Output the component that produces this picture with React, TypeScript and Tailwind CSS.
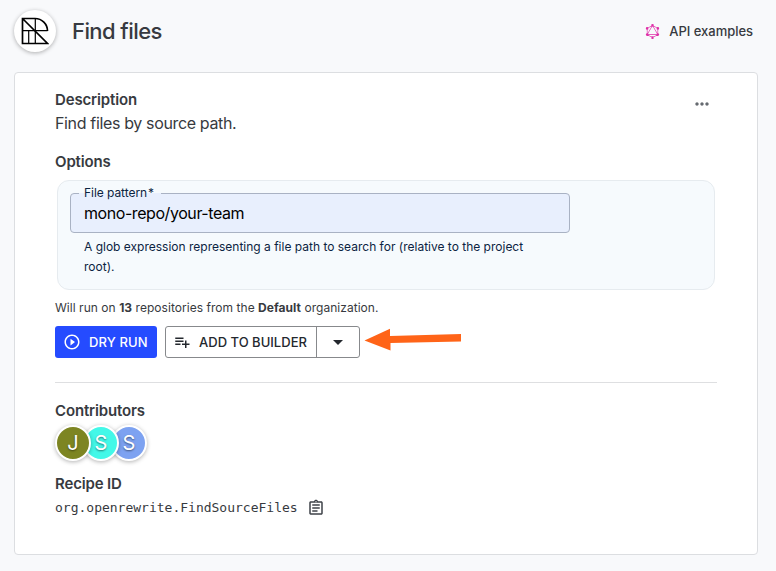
import type { ReactNode } from "react";
import { MdArrowDropDown, MdMoreHoriz, MdOutlineAssignment, MdPlayCircleOutline, MdPlaylistAdd } from "react-icons/md";
import { SiGraphql } from "react-icons/si";

function RecipeLogo() {
  return (
    <svg width="28" height="28" viewBox="0 0 28 28" fill="none" stroke="#000">
      <path strokeWidth="1.7" d="M14 1.5A12.500 12.500 0 0 1 26.500 14M14 1.500H1.500V26.500H26.500L1.500 1.500" />
      <path strokeWidth="1.2" d="M1.500 13.700H26.500M14.300 1.500V26.500M7.700 13.700V26.500" />
    </svg>
  );
}

function Heading({ children }: { children: ReactNode }) {
  return <h2 className="h-5 text-[15px] leading-5 font-semibold tracking-[-0.15px]">{children}</h2>;
}

const contributors = [
  { initial: "J", color: "bg-[#7d8522]" },
  { initial: "S", color: "bg-[#43f8e8]" },
  { initial: "S", color: "bg-[#7da2f1]" },
];

export default function App() {
  return (
    <div className="h-[571px] w-[776px] overflow-hidden bg-[#f8f9fb] pl-3.5 font-['Inter',sans-serif] whitespace-nowrap text-[#373a40]">
      <header className="flex h-[72px] items-start pt-2.5">
        <div className="flex size-[42px] items-center justify-center rounded-full bg-white shadow-[0_1px_4px_rgba(0,0,0,0.3)]">
          <RecipeLogo />
        </div>
        <h1 className="ml-4 h-[42px] text-[22px] leading-[42px] font-medium tracking-[-0.57px]">Find files</h1>
        <a className="mr-[23px] ml-auto flex h-[42px] items-center gap-[9px] text-[13px] font-medium tracking-[-0.03px]">
          <SiGraphql size={15} color="#df2fa8" />
          <span className="pt-0.5">API examples</span>
        </a>
      </header>

      <main className="h-[483px] w-[744px] rounded-[4px] border border-[#dcdee1] bg-white pt-[17px] pr-10 pl-10">
        <div className="flex justify-between">
          <Heading>Description</Heading>
          <MdMoreHoriz size={20} color="#666a70" className="mt-1 mr-[5px] -mb-1" />
        </div>
        <p className="h-[42px] pt-px text-base leading-6 tracking-[-0.35px]">Find files by source path.</p>
        <Heading>Options</Heading>

        <section className="mt-2 ml-0.5 h-[110px] w-[658px] rounded-[12px] border border-[#e6ebef] bg-[#f6fafd] pt-3 pl-3 text-[#0c2442]">
          <div className="relative flex h-10 w-[500px] items-center rounded-[4px] border border-[#a9b2c3] bg-[#e8effd] pl-[13px] text-base tracking-[-0.43px] text-black">
            <span className="absolute -top-[9px] left-2 flex h-4 w-[82px] items-center bg-linear-to-b from-[#f6fafd] from-50% to-[#e8effd] to-50% pl-[5px] text-xs tracking-[-0.05px] text-[#0c2442]">
              File pattern<span className="ml-px">*</span>
            </span>
            mono-repo/your-team
          </div>
          <p className="mt-1 ml-3.5 text-xs leading-5 tracking-normal">
            A glob expression representing a file path to search for (relative to the project<br />root).
          </p>
        </section>

        <p className="mt-2.5 h-4 text-xs leading-4 tracking-[0.04px]">
          Will run on <b className="font-bold">13</b> repositories from the <b className="font-bold">Default</b> organization.
        </p>

        <div className="mt-2.5 flex h-8 items-center">
          <button className="flex h-8 w-[102px] items-center gap-2 rounded-[3px] bg-[#254bff] pl-2 text-[13px] font-medium tracking-[0.1px] text-white">
            <MdPlayCircleOutline size={18} />
            <span className="pt-0.5">DRY RUN</span>
          </button>
          <div className="ml-2 flex h-8 w-[195px] rounded-[3px] border border-[#87898c] text-[#24282e]">
            <button className="flex w-[151px] items-center gap-2 border-r border-[#87898c] pl-[7px] text-[13px] font-medium tracking-[0.02px]">
              <MdPlaylistAdd size={18} />
              <span className="pt-0.5">ADD TO BUILDER</span>
            </button>
            <button className="flex flex-1 items-center justify-center">
              <MdArrowDropDown size={24} />
            </button>
          </div>
          <svg className="mb-1 ml-1" width="98" height="24" viewBox="0 0 98 24">
            <path d="M0.500 12.500L26 0.800V8L97 6V13.500L26.500 15V22.500Z" fill="#ff6418" />
          </svg>
        </div>

        <hr className="mt-6 mb-[18px] w-[662px] border-[#dedfe1]" />
        <Heading>Contributors</Heading>
        <div className="mt-1 flex">
          {contributors.map((person, index) => (
            <div
              key={index}
              style={{ zIndex: contributors.length - index }}
              className={`relative -mr-2 flex size-9 items-center justify-center rounded-full border-2 border-white text-[20px] text-white shadow-[0_1px_4px_rgba(0,0,0,0.3)] text-shadow-[0_1px_2px_rgba(0,0,0,0.5)] ${person.color}`}
            >
              {person.initial}
            </div>
          ))}
        </div>
        <div className="mt-[13px]">
          <Heading>Recipe ID</Heading>
        </div>
        <div className="mt-1 flex h-5 items-center gap-[9px]">
          <code className="font-['DejaVu_Sans_Mono',monospace] text-[13px]">org.openrewrite.FindSourceFiles</code>
          <MdOutlineAssignment size={18} color="#3e4248" />
        </div>
      </main>
    </div>
  );
}
